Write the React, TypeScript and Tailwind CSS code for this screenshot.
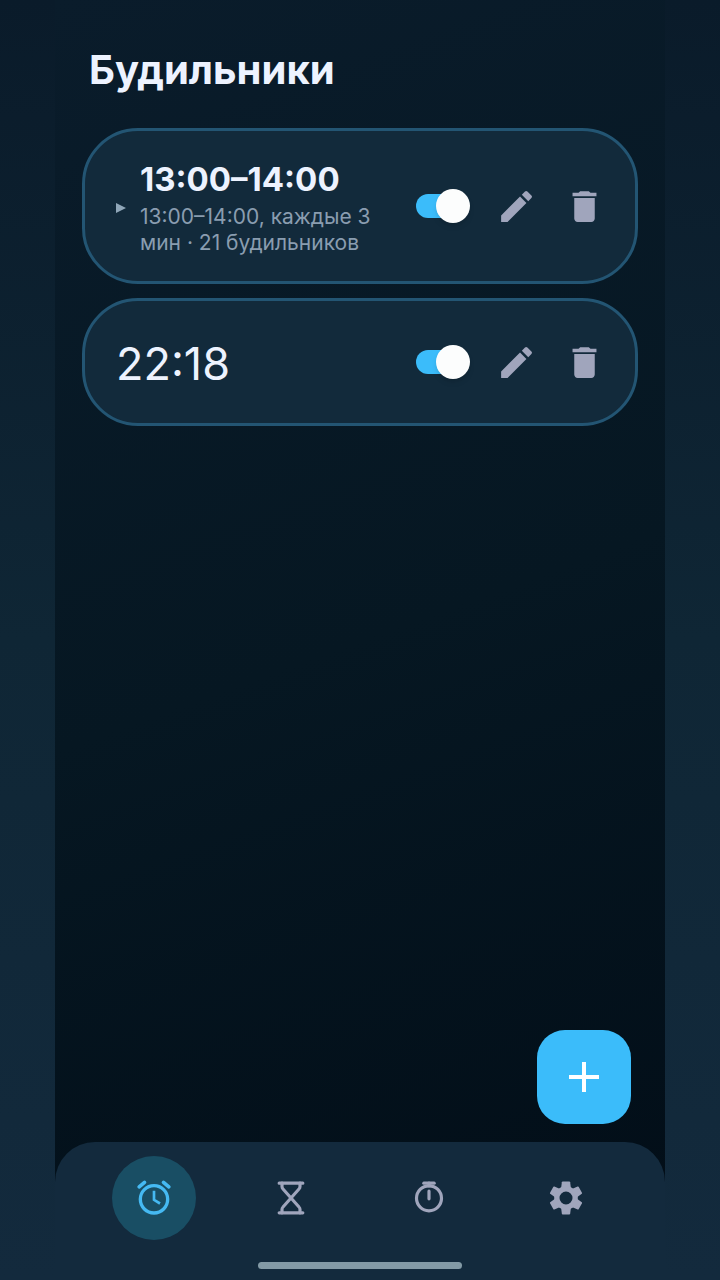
import { useState } from "react";
import type { ReactNode } from "react";
import { MdDelete, MdEdit } from "react-icons/md";

interface Alarm {
    id: string;
    time: string;
    details?: string;
}

const alarms: Alarm[] = [
    { id: "range", time: "13:00–14:00", details: "13:00–14:00, каждые 3 мин · 21 будильников" },
    { id: "single", time: "22:18" },
];

const gearTeeth = [0, 60, 120, 180, 240, 300];

function AlarmIcon() {
    return (
        <svg viewBox="0 0 24 24" className="size-10" fill="none" stroke="currentColor" strokeWidth="2">
            <circle cx="12" cy="12.8" r="8.2" />
            <path d="M3.1 5.3l3.2-2.7M20.9 5.3l-3.2-2.7" strokeWidth="2.2" strokeLinecap="round" />
            <path d="M12 7.7v5.4l3.6 2.2" strokeWidth="1.6" />
        </svg>
    );
}

function HourglassIcon() {
    return (
        <svg viewBox="0 0 24 24" className="size-10" fill="none" stroke="currentColor" strokeWidth="1.9" strokeLinecap="round" strokeLinejoin="round">
            <path d="M4.9 3.1h14.2M4.9 20.9h14.2" />
            <path d="M6.6 3.1v2c0 .6.2 1.1.6 1.5L12 12l4.8-5.4c.4-.4.6-.9.6-1.5v-2" />
            <path d="M6.6 20.9v-2c0-.6.2-1.1.6-1.5L12 12l4.8 5.4c.4.4.6.9.6 1.5v2" />
        </svg>
    );
}

function StopwatchIcon() {
    return (
        <svg viewBox="0 0 24 24" className="size-10" fill="none" stroke="currentColor" strokeWidth="1.9" strokeLinecap="round">
            <circle cx="12" cy="12.2" r="7.5" />
            <path d="M8.9 3.1h6.2" />
            <path d="M12 3.1v1.6M12 7.9v4.6" />
        </svg>
    );
}

function GearIcon() {
    return (
        <svg viewBox="0 0 24 24" className="size-10" fill="currentColor">
            <circle cx="12" cy="12" r="5.5" fill="none" stroke="currentColor" strokeWidth="3.2" />
            {gearTeeth.map((angle) => (
                <path key={angle} d="M9 6.6L9.5 2.5q.1-.4.5-.4h4q.4 0 .5.4l.5 4.1z" transform={`rotate(${angle} 12 12)`} />
            ))}
        </svg>
    );
}

function Switch({ label }: { label: string }) {
    const [on, setOn] = useState(true);

    return (
        <label className="relative flex h-[34px] w-[54px] shrink-0 cursor-pointer items-center">
            <input
                type="checkbox"
                role="switch"
                aria-label={label}
                className="peer sr-only"
                checked={on}
                onChange={(e) => setOn(e.target.checked)}
            />
            <span className="h-6 w-12 rounded-full bg-slate-600 peer-checked:bg-[#3bbcfa]" />
            <span className="absolute left-0 size-[34px] rounded-full bg-[#fcfdfd] shadow-md peer-checked:left-5" />
        </label>
    );
}

function IconButton({ label, children }: { label: string; children: ReactNode }) {
    return (
        <button type="button" aria-label={label} className="flex h-[72px] w-[68px] items-center justify-center text-[#a0a5bc]">
            {children}
        </button>
    );
}

function AlarmCard({ alarm }: { alarm: Alarm }) {
    return (
        <li className="flex items-center rounded-[56px] border-3 border-[#235573] bg-[#122a3b] py-[25px] pr-[17px] pl-[31px]">
            {alarm.details ? (
                <>
                    <button type="button" aria-label="Развернуть" className="mr-3 w-3 shrink-0 pt-1 text-[#8fa6b8]">
                        <svg viewBox="0 0 12 12" className="size-3" fill="currentColor">
                            <path d="M0 1v10l10-5z" />
                        </svg>
                    </button>
                    <div className="min-w-0 flex-1 pr-5">
                        <h2 className="text-[33px] leading-[46px] font-bold">{alarm.time}</h2>
                        <p className="pt-0.5 text-[21px] leading-[26px] text-[#8a9db0]">{alarm.details}</p>
                    </div>
                </>
            ) : (
                <h2 className="min-w-0 flex-1 pt-1 text-[45px] leading-[54px]">{alarm.time}</h2>
            )}
            <Switch label={alarm.time} />
            <div className="ml-3 flex shrink-0">
                <IconButton label="Изменить">
                    <MdEdit className="size-[41px]" />
                </IconButton>
                <IconButton label="Удалить">
                    <MdDelete className="size-[41px]" />
                </IconButton>
            </div>
        </li>
    );
}

function TabButton({ label, active = false, children }: { label: string; active?: boolean; children: ReactNode }) {
    return (
        <button
            type="button"
            aria-label={label}
            aria-current={active ? "page" : undefined}
            className={
                active
                    ? "flex size-[84px] items-center justify-center rounded-full bg-[#194e64] text-[#45b9f2]"
                    : "flex size-[84px] items-center justify-center rounded-full text-[#a0a5bc]"
            }
        >
            {children}
        </button>
    );
}

export default function App() {
    return (
        <div className="min-h-screen bg-linear-to-b from-[#0a1b2a] via-[#0f2635] to-[#132a3d] px-[55px] font-['Inter',sans-serif] text-[#edf3ff]">
            <div className="flex min-h-screen flex-col bg-linear-160 from-[#0a1c2b] via-[#061722] to-[#020d17]">
                {/* Title */}
                <header className="px-[34px] pt-[46px] pb-[34px]">
                    <h1 className="text-[40px] leading-[48px] font-bold">Будильники</h1>
                </header>

                {/* Alarm list */}
                <main className="flex flex-1 flex-col px-[27px]">
                    <ul className="flex flex-col gap-[14px]">
                        {alarms.map((alarm) => (
                            <AlarmCard key={alarm.id} alarm={alarm} />
                        ))}
                    </ul>
                    <button
                        type="button"
                        aria-label="Добавить будильник"
                        className="mt-auto mr-[7px] mb-[18px] flex size-[94px] items-center justify-center self-end rounded-[28px] bg-[#3bbcfa] text-white"
                    >
                        <svg viewBox="0 0 32 32" className="size-8" stroke="currentColor" strokeWidth="4">
                            <path d="M16 1v30M1 16h30" />
                        </svg>
                    </button>
                </main>

                {/* Bottom navigation */}
                <footer className="flex flex-col items-center rounded-t-[40px] bg-[#132a3d] px-[30px] pt-[14px] pb-[11px]">
                    <nav className="grid w-full grid-cols-4 justify-items-center">
                        <TabButton label="Будильники" active>
                            <AlarmIcon />
                        </TabButton>
                        <TabButton label="Таймер">
                            <HourglassIcon />
                        </TabButton>
                        <TabButton label="Секундомер">
                            <StopwatchIcon />
                        </TabButton>
                        <TabButton label="Настройки">
                            <GearIcon />
                        </TabButton>
                    </nav>
                    <div className="mt-[22px] h-[7px] w-[204px] rounded-full bg-[#839aa6]" />
                </footer>
            </div>
        </div>
    );
}
